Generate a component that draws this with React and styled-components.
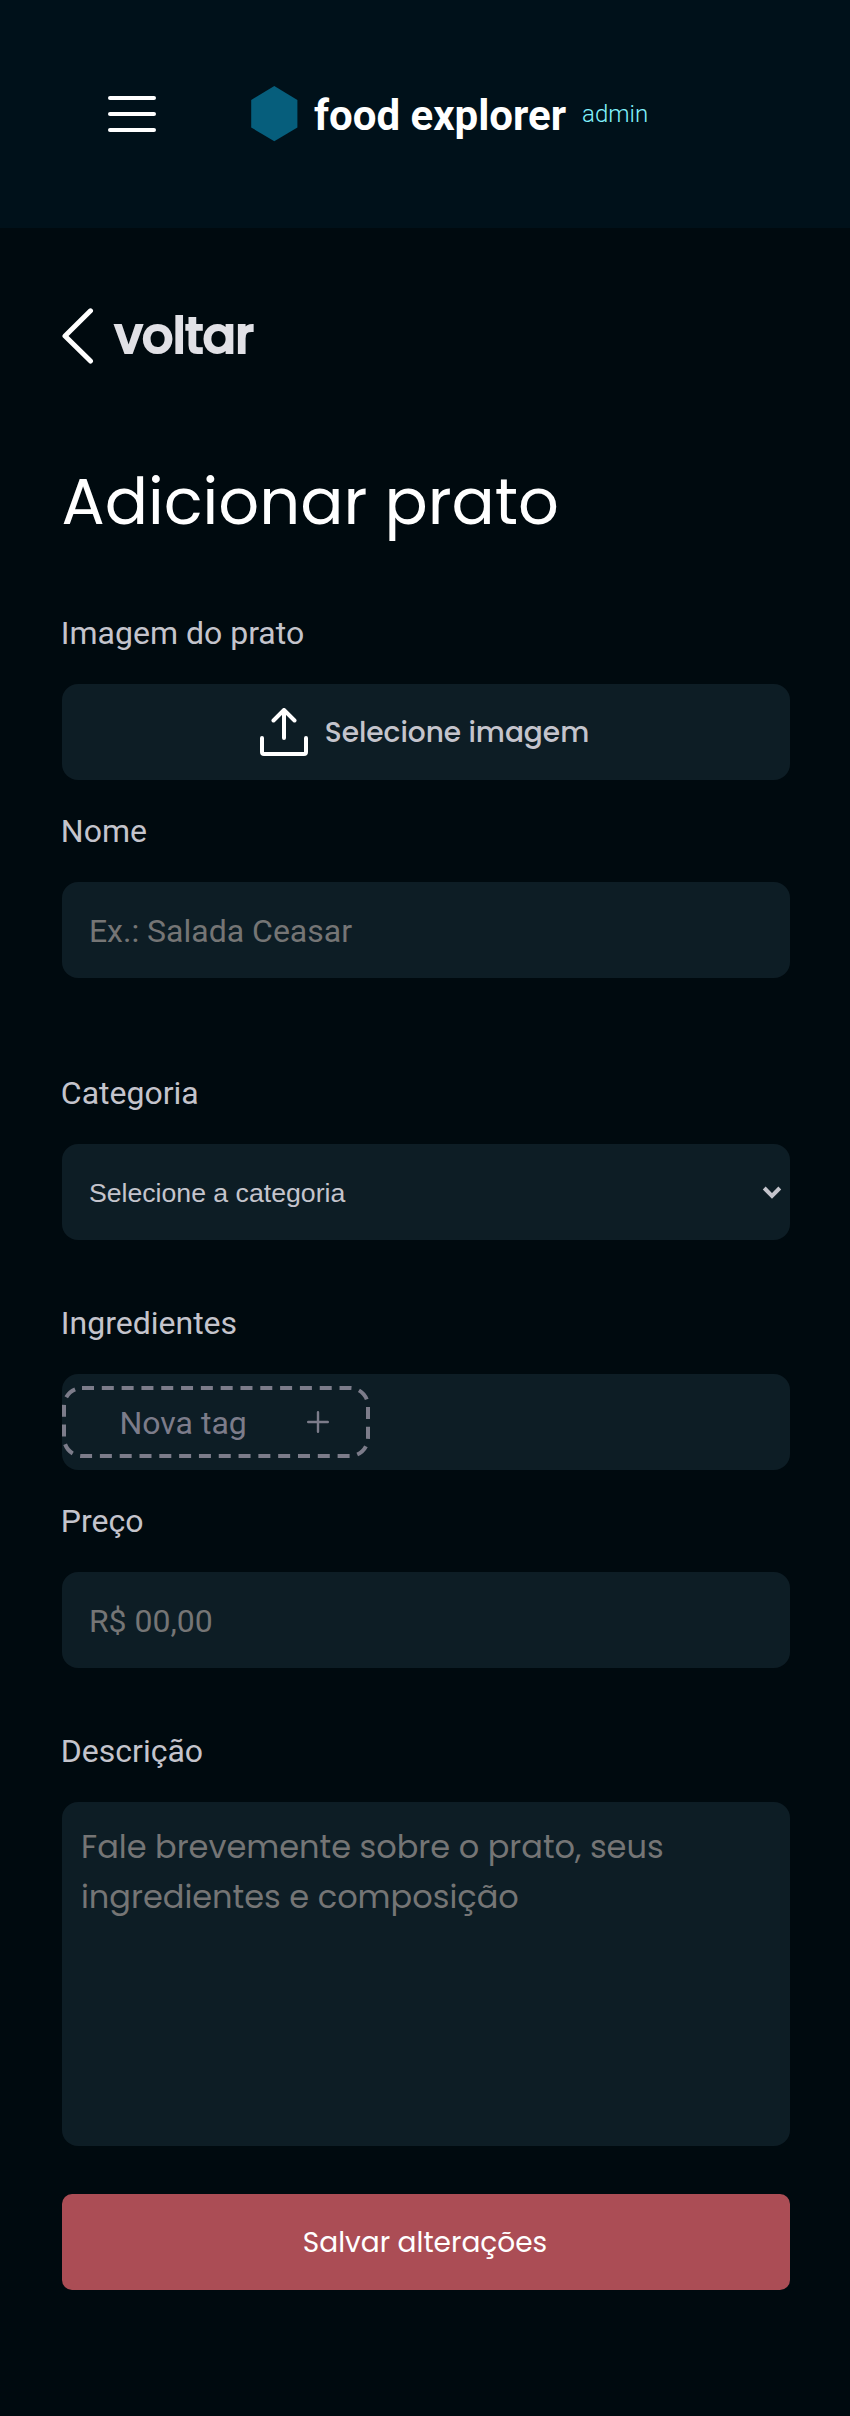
import React from "react";
import styled, { createGlobalStyle } from "styled-components";

const Global = createGlobalStyle`
  * { box-sizing: border-box; margin: 0; padding: 0; }
  body { background: #000a0f; }
`;

const display = `"Poppins", "Inter", "Liberation Sans", sans-serif`;
const body = `"Roboto", "Liberation Sans", sans-serif`;

const Page = styled.div`
  min-height: 2416px;
  background: #000a0f;
  color: #c4c4cc;
  font-family: ${body};
`;

const Header = styled.header`
  display: flex;
  align-items: center;
  height: 228px;
  padding-left: 108px;
  background: #00111a;
`;

const MenuButton = styled.button`
  display: flex;
  flex-direction: column;
  gap: 12px;
  width: 48px;
  margin-right: 95px;
  border: 0;
  background: none;
`;

const MenuBar = styled.span`
  height: 4px;
  border-radius: 2px;
  background: #fff;
`;

const Logo = styled.div`
  display: flex;
  align-items: center;
  svg { display: block; margin-right: 16px; }
`;

const LogoName = styled.h1`
  padding-top: 3px;
  font: 700 42px/50px ${body};
  color: #fff;
  white-space: nowrap;
`;

const Role = styled.span`
  margin-left: 16px;
  font: 300 24px/38px ${body};
  color: #82f3ff;
`;

const Main = styled.main`
  padding: 80px 60px 0 61.5px;
`;

const Back = styled.a`
  display: flex;
  align-items: center;
  gap: 21px;
  height: 56px;
  font: 500 49px/56px ${display};
  -webkit-text-stroke: 2px #e1e1e6;
  letter-spacing: -0.6px;
  color: #e1e1e6;
`;

const BackLabel = styled.span`
  padding-bottom: 1px;
`;

const Title = styled.h2`
  margin-top: 89px;
  font: 400 64px/97px ${display};
  color: #fff;
`;

const Field = styled.div`
  margin-top: ${(p) => p.$gap}px;
`;

const Label = styled.label`
  display: block;
  height: 38px;
  margin: 0 0 32px -0.7px;
  font: 400 32px/38px ${body};
  color: #c4c4cc;
`;

const Box = styled.div`
  display: flex;
  align-items: center;
  height: 96px;
  border-radius: 16px;
  background: #0d1d25;
`;

const UploadBox = styled(Box)`
  justify-content: center;
  padding-right: 2px;
`;

const UploadText = styled.span`
  margin-left: 17px;
  padding-top: 1px;
  font: 500 28px/42px ${display};
`;

const Input = styled.input`
  width: 100%;
  height: 96px;
  padding: 2px 0 0 27.4px;
  border: 0;
  outline: 0;
  background: none;
  color: #c4c4cc;
  font: 400 32px/38px ${body};
  &::placeholder { color: #757575; opacity: 1; }
`;

const Select = styled.select`
  appearance: none;
  flex: 1;
  height: 96px;
  padding: 2px 0 0 27.4px;
  border: 0;
  border-radius: 16px;
  background: none;
  color: #c4c4cc;
  font: 400 26.667px/32px "Liberation Sans", sans-serif;
`;

const SelectArrow = styled.svg`
  display: block;
  margin-right: 8px;
`;

const Tag = styled.div`
  display: flex;
  align-items: center;
  position: relative;
  width: 308px;
  height: 72px;
`;

const TagOutline = styled.svg`
  position: absolute;
  inset: 0;
  pointer-events: none;
`;

const TagInput = styled(Input)`
  flex: none;
  width: 244px;
  height: 72px;
  padding-left: 58px;
  &::placeholder { color: #7c7c8a; }
`;

const TextArea = styled.textarea`
  display: block;
  width: 728px;
  height: 344px;
  padding: 20px 20px 20px 19.5px;
  border: 0;
  outline: 0;
  resize: none;
  border-radius: 16px;
  background: #0d1d25;
  color: #c4c4cc;
  font: 400 32px/50px ${display};
  &::placeholder { color: #757575; opacity: 1; }
`;

const Save = styled.button`
  width: 728px;
  height: 96px;
  margin-top: 48px;
  padding: 1px 1px 0 0;
  border: 0;
  border-radius: 10px;
  background: #ab4d55;
  color: #fff;
  font: 400 28px/42px ${display};
`;

const Form = styled.form`
  width: 728px;
`;

export default function App() {
  return (
    <Page>
      <Global />
      <Header>
        <MenuButton aria-label="Menu">
          <MenuBar />
          <MenuBar />
          <MenuBar />
        </MenuButton>
        <Logo>
          <svg width="47" height="56" viewBox="0 0 47 56">
            <path d="M23.3 0L46.4 14V41.5L23.3 55.2L0.2 41.5V14Z" fill="#065e7c" />
          </svg>
          <LogoName>food explorer</LogoName>
          <Role>admin</Role>
        </Logo>
      </Header>
      <Main>
        <Back>
          <svg width="32" height="56" viewBox="0 0 32 56" fill="none">
            <path d="M28.5 2.8L3 28L28.5 53" stroke="#fff" strokeWidth="5" strokeLinecap="round" strokeLinejoin="round" />
          </svg>
          <BackLabel>voltar</BackLabel>
        </Back>
        <Title>Adicionar prato</Title>
        <Form>
          <Field $gap={64}>
            <Label>Imagem do prato</Label>
            <UploadBox>
              <svg width="48" height="48" viewBox="0 0 48 48" fill="none" stroke="#fff" strokeWidth="4" strokeLinecap="round" strokeLinejoin="round">
                <path d="M2 30V44Q2 46 4 46H44Q46 46 46 44V30M24 30V2M13.5 12.5L24 2L34.5 12.5" />
              </svg>
              <UploadText>Selecione imagem</UploadText>
            </UploadBox>
          </Field>
          <Field $gap={32}>
            <Label>Nome</Label>
            <Box>
              <Input placeholder="Ex.: Salada Ceasar" />
            </Box>
          </Field>
          <Field $gap={96}>
            <Label>Categoria</Label>
            <Box>
              <Select>
                <option>Selecione a categoria</option>
              </Select>
              <SelectArrow width="20" height="16" viewBox="0 0 20 16" fill="none">
                <path d="M2.2 4L10 11.8L17.8 4" stroke="#c4c4cc" strokeWidth="4" />
              </SelectArrow>
            </Box>
          </Field>
          <Field $gap={64}>
            <Label>Ingredientes</Label>
            <Box>
              <Tag>
                <TagOutline width="308" height="72" viewBox="0 0 308 72" fill="none">
                  <rect x="2" y="2" width="304" height="68" rx="18" stroke="#7c7c8a" strokeWidth="4" strokeDasharray="12 7.81" />
                </TagOutline>
                <TagInput placeholder="Nova tag" />
                <svg width="24" height="24" viewBox="0 0 24 24" stroke="#7c7c8a" strokeWidth="2.4" strokeLinecap="round">
                  <path d="M12 2.2V21.8M2.2 12H21.8" />
                </svg>
              </Tag>
            </Box>
          </Field>
          <Field $gap={32}>
            <Label>Preço</Label>
            <Box>
              <Input placeholder="R$ 00,00" />
            </Box>
          </Field>
          <Field $gap={64}>
            <Label>Descrição</Label>
            <TextArea placeholder="Fale brevemente sobre o prato, seus ingredientes e composição" />
          </Field>
          <Save type="button">Salvar alterações</Save>
        </Form>
      </Main>
    </Page>
  );
}
